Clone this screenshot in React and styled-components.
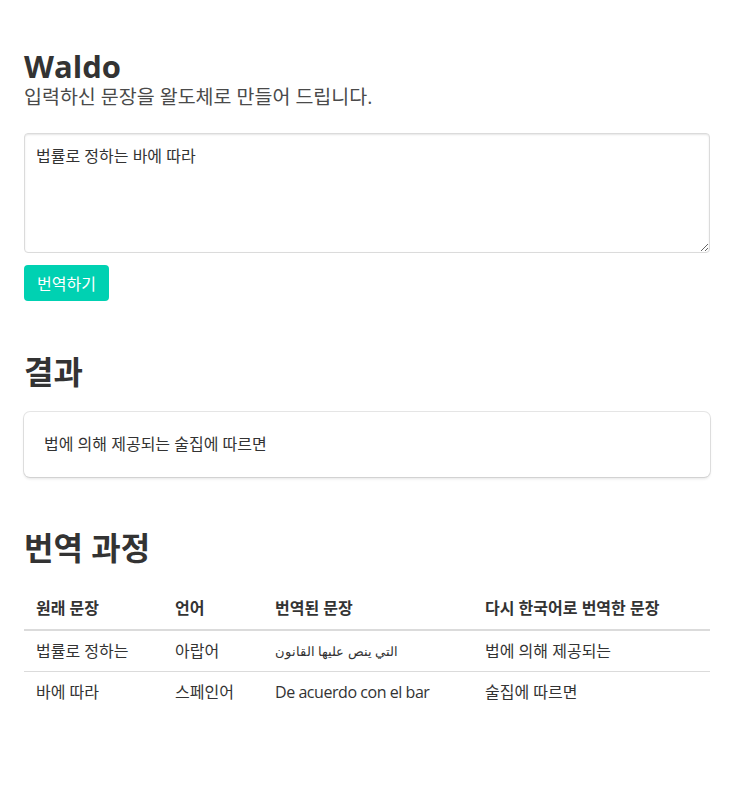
import React, { useState } from "react";
import styled, { createGlobalStyle } from "styled-components";

const GlobalStyle = createGlobalStyle`
    html, body {
        margin: 0;
        padding: 0;
        background: #fff;
    }
    body {
        font-family: "Open Sans", "Noto Sans CJK KR", sans-serif;
        color: #333;
        font-size: 16px;
    }
`;

const rows = [
    {
        source: "법률로 정하는",
        lang: "아랍어",
        translated: "التي ينص عليها القانون",
        kind: "arabic",
        back: "법에 의해 제공되는",
    },
    {
        source: "바에 따라",
        lang: "스페인어",
        translated: "De acuerdo con el bar",
        kind: "latin",
        back: "술집에 따르면",
    },
];

function App() {
    const [text, setText] = useState("법률로 정하는 바에 따라");

    return (
        <>
            <GlobalStyle />
            <Section>
                <Title>Waldo</Title>
                <Subtitle>입력하신 문장을 왈도체로 만들어 드립니다.</Subtitle>
                <TextArea value={text} onChange={(e) => setText(e.target.value)} />
                <PrimaryButton>번역하기</PrimaryButton>

                <Heading>결과</Heading>
                <Box>법에 의해 제공되는 술집에 따르면</Box>

                <Heading>번역 과정</Heading>
                <Table>
                    <colgroup>
                        <col style={{ width: 139 }} />
                        <col style={{ width: 100 }} />
                        <col style={{ width: 210 }} />
                        <col />
                    </colgroup>
                    <thead>
                        <tr>
                            <Th>원래 문장</Th>
                            <Th>언어</Th>
                            <Th>번역된 문장</Th>
                            <Th>다시 한국어로 번역한 문장</Th>
                        </tr>
                    </thead>
                    <tbody>
                        {rows.map((row, id) => (
                            <tr key={id}>
                                <Td>{row.source}</Td>
                                <Td>{row.lang}</Td>
                                <Td $kind={row.kind}>{row.translated}</Td>
                                <Td>{row.back}</Td>
                            </tr>
                        ))}
                    </tbody>
                </Table>
            </Section>
        </>
    );
}

export default App;

const Section = styled.div`
    padding: 48px 24px;
    display: flex;
    flex-direction: column;
    align-items: flex-start;
`;

const Title = styled.h1`
    margin: 0;
    font-size: 31px;
    line-height: 36px;
    font-weight: 700;
    color: #333;
`;

const Subtitle = styled.h2`
    margin: 0;
    font-size: 19.5px;
    line-height: 25px;
    font-weight: 400;
    color: #4a4a4a;
`;

const TextArea = styled.textarea`
    box-sizing: border-box;
    margin-top: 24px;
    width: 100%;
    height: 120px;
    padding: 10px 11px;
    border: 1px solid #dbdbdb;
    border-radius: 4px;
    box-shadow: inset 0 1px 2px rgba(10, 10, 10, 0.1);
    font-family: inherit;
    font-size: 16px;
    line-height: 1.5;
    color: #333;
    resize: vertical;
    outline: none;
`;

const PrimaryButton = styled.button`
    margin-top: 12px;
    height: 36px;
    padding: 0 13px;
    border: none;
    border-radius: 4px;
    background: #00d1b2;
    color: #fff;
    font-family: inherit;
    font-size: 16px;
    cursor: pointer;
`;

const Heading = styled.h2`
    margin: 53px 0 22px;
    font-size: 32px;
    line-height: 36px;
    font-weight: 700;
    color: #333;
`;

const Box = styled.div`
    box-sizing: border-box;
    width: 100%;
    padding: 20px;
    border-radius: 6px;
    background: #fff;
    box-shadow: 0 2px 3px rgba(10, 10, 10, 0.1), 0 0 0 1px rgba(10, 10, 10, 0.1);
    font-size: 16px;
    line-height: 25px;
`;

const Table = styled.table`
    width: 100%;
    border-collapse: collapse;
    font-size: 16px;
`;

const Th = styled.th`
    text-align: left;
    font-weight: 700;
    padding: 8px 12px;
    line-height: 25px;
    border-bottom: 2px solid #dbdbdb;
    color: #333;
`;

const Td = styled.td`
    padding: 8px 12px;
    line-height: 24px;
    border-bottom: 1px solid #dbdbdb;
    font-size: ${(p) => (p.$kind === "arabic" ? "13px" : "16px")};
    letter-spacing: ${(p) => (p.$kind === "latin" ? "-0.45px" : "normal")};

    tr:last-child > & {
        border-bottom: none;
    }
`;
